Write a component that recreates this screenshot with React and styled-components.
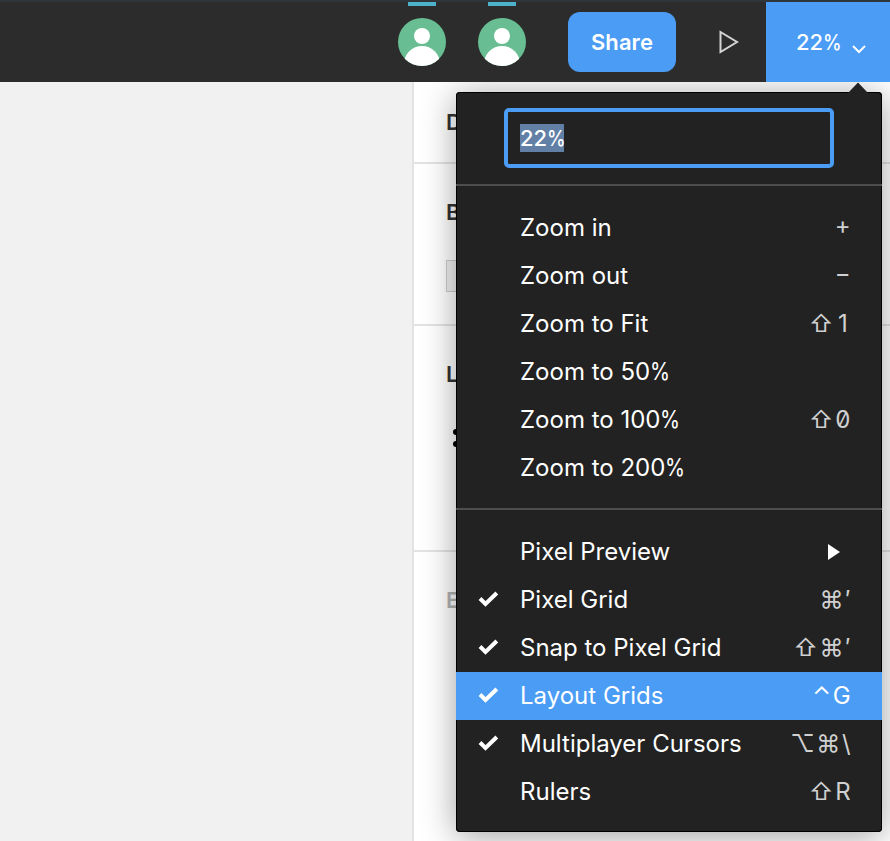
import React from 'react';
import styled, { createGlobalStyle } from 'styled-components';

const BLUE = '#4a9cf5';

const GlobalStyle = createGlobalStyle`
  * { box-sizing: border-box; }
  body {
    margin: 0;
    overflow: hidden;
    font-family: Inter, "Liberation Sans", sans-serif;
    -webkit-font-smoothing: antialiased;
  }
`;

const Screen = styled.div`
  display: flex;
  flex-direction: column;
  width: 890px;
  height: 841px;
  overflow: hidden;
  background: #f1f1f1;
`;

const Toolbar = styled.header`
  position: relative;
  z-index: 3;
  flex: none;
  display: flex;
  justify-content: flex-end;
  height: 82px;
  background: #2c2c2c;
  border-top: 2px solid #2f353a;
`;

const Person = styled.div`
  display: flex;
  flex-direction: column;
  align-items: center;
  width: 48px;
  margin-right: 32px;
`;

const PresenceBar = styled.span`
  width: 28px;
  height: 4px;
  margin-bottom: 12px;
  background: #4eb1cb;
`;

const ShareButton = styled.button`
  width: 108px;
  height: 60px;
  margin: 10px 0 0 10px;
  padding: 0;
  border: 0;
  border-radius: 12px;
  background: ${BLUE};
  color: #fff;
  font: 600 22px/60px Inter, sans-serif;
  letter-spacing: 0.1px;
`;

const PlayButton = styled.div`
  display: flex;
  justify-content: center;
  width: 90px;
  padding: 26px 0 0 16px;
`;

const ZoomButton = styled.div`
  display: flex;
  width: 124px;
  padding-left: 30px;
  background: ${BLUE};
  color: #fff;
  font-size: 22px;
  font-weight: 500;
  line-height: 80px;
  svg { margin: 42px 0 0 10px; }
`;

const PercentSign = styled.span`
  display: inline-block;
  margin-right: -0.14em;
  transform: scaleX(0.85);
  transform-origin: left;
`;

const Workspace = styled.main`
  position: relative;
  flex: 1;
  display: flex;
  justify-content: flex-end;
`;

const Sidebar = styled.aside`
  width: 478px;
  border-left: 2px solid #e3e3e3;
  background: #fff;
`;

const Section = styled.section`
  height: ${(p) => p.$height}px;
  padding: ${(p) => p.$top}px 0 0 32px;
  border-bottom: 2px solid #e3e3e3;
  color: ${(p) => (p.$muted ? '#b3b3b3' : '#333')};
  font-size: 22px;
  font-weight: 600;
  line-height: 32px;
`;

const Swatch = styled.div`
  width: 32px;
  height: 32px;
  margin-top: 32px;
  border: 1px solid #ccc;
  background: #f1f1f1;
`;

const GripDots = styled.svg`
  display: block;
  margin: 38px 0 0 7px;
`;

const Menu = styled.div`
  position: absolute;
  z-index: 2;
  top: 10px;
  right: 8px;
  display: flex;
  flex-direction: column;
  width: 426px;
  height: 740px;
  border-radius: 4px;
  background: #222;
  box-shadow: inset 0 0 0 1px #000, 0 4px 34px rgba(0, 0, 0, 0.38);
  color: #fff;
`;

const Pointer = styled.svg`
  position: absolute;
  top: -10px;
  right: 14px;
`;

const ZoomField = styled.div`
  flex: none;
  width: 330px;
  height: 60px;
  margin: 16px 0 16px 48px;
  padding: 12px;
  border: 4px solid ${BLUE};
  border-radius: 5px;
`;

const Selection = styled.span`
  display: inline-block;
  width: 44px;
  height: 28px;
  background: #627fa6;
  font-size: 22px;
  font-weight: 500;
  line-height: 28px;
  white-space: nowrap;
`;

const Divider = styled.div`
  flex: none;
  height: 2px;
  background: #4d4d4d;
`;

const Group = styled.div`
  display: flex;
  flex-direction: column;
  padding: 18px 0 16px;
`;

const MenuItem = styled.div`
  display: flex;
  align-items: center;
  height: 48px;
  padding-right: 32px;
  background: ${(p) => (p.$active ? BLUE : 'transparent')};
  font-size: 24px;
  line-height: 48px;
  letter-spacing: 0;
`;

const CheckSlot = styled.span`
  display: flex;
  width: 64px;
  padding: 0 0 2px 22px;
`;

const Label = styled.span`
  flex: 1;
  white-space: nowrap;
`;

const Shortcut = styled.span`
  display: flex;
  color: ${(p) => (p.$active ? '#fff' : '#d0d0d0')};
  letter-spacing: 1.6px;
  margin-right: -2.2px;
  font-feature-settings: "zero" 1, "case" 1;
`;

const KeyDigit = styled.span`
  display: inline-block;
  width: 17px;
  text-align: center;
`;

const Avatar = () => (
  <svg width="48" height="48" viewBox="0 0 48 48">
    <defs>
      <clipPath id="disc"><circle cx="24" cy="24" r="24" /></clipPath>
    </defs>
    <g clipPath="url(#disc)">
      <rect width="48" height="48" fill="#68be92" />
      <circle cx="24" cy="18" r="8" fill="#fff" />
      <circle cx="24" cy="46" r="18" fill="#fff" />
    </g>
  </svg>
);

const Check = () => (
  <svg width="21" height="16" viewBox="0 0 21 16">
    <path d="M2 7.5 L7.5 13 L18.8 2" fill="none" stroke="#fff" strokeWidth="4" />
  </svg>
);

const Percentage = ({ text }) => (
  <>
    {text.slice(0, -1)}
    <PercentSign>%</PercentSign>
  </>
);

const groups = [
  [
    { label: 'Zoom in', keys: '+' },
    { label: 'Zoom out', keys: '−' },
    { label: 'Zoom to Fit', keys: '⇧', digit: '1' },
    { label: 'Zoom to 50%' },
    { label: 'Zoom to 100%', keys: '⇧', digit: '0' },
    { label: 'Zoom to 200%' },
  ],
  [
    { label: 'Pixel Preview', submenu: true },
    { label: 'Pixel Grid', checked: true, keys: '⌘′' },
    { label: 'Snap to Pixel Grid', checked: true, keys: '⇧⌘′' },
    { label: 'Layout Grids', checked: true, keys: '⌃G', active: true },
    { label: 'Multiplayer Cursors', checked: true, keys: '⌥⌘\\' },
    { label: 'Rulers', keys: '⇧R' },
  ],
];

export default function App() {
  return (
    <Screen>
      <GlobalStyle />
      <Toolbar>
        <Person><PresenceBar /><Avatar /></Person>
        <Person><PresenceBar /><Avatar /></Person>
        <ShareButton>Share</ShareButton>
        <PlayButton>
          <svg width="20" height="26" viewBox="0 0 20 26">
            <path d="M1.5 4 L18 14 L1.5 24 Z" fill="none" stroke="#d4d4d4" strokeWidth="2" />
          </svg>
        </PlayButton>
        <ZoomButton>
          <span><Percentage text="22%" /></span>
          <svg width="14" height="12" viewBox="0 0 14 12">
            <path d="M1 2 L7 8 L13 2" fill="none" stroke="#fff" strokeWidth="2" />
          </svg>
        </ZoomButton>
      </Toolbar>
      <Workspace>
        <Sidebar>
          <Section $height={82} $top={24}>D</Section>
          <Section $height={162} $top={32}>B<Swatch /></Section>
          <Section $height={226} $top={32}>
            L
            <GripDots width="22" height="20" viewBox="0 0 22 20">
              <circle cx="3" cy="4" r="3" />
              <circle cx="3" cy="16" r="3" />
            </GripDots>
          </Section>
          <Section $height={300} $top={32} $muted>E</Section>
        </Sidebar>
        <Menu>
          <Pointer width="20" height="11" viewBox="0 0 20 11">
            <path d="M0 11 L10 0.5 L20 11 Z" fill="#222" />
          </Pointer>
          <ZoomField><Selection><Percentage text="22%" /></Selection></ZoomField>
          {groups.map((items, i) => (
            <React.Fragment key={i}>
              <Divider />
              <Group>
                {items.map((item) => (
                  <MenuItem key={item.label} $active={item.active}>
                    <CheckSlot>{item.checked && <Check />}</CheckSlot>
                    <Label>
                      {item.label.endsWith('%') ? <Percentage text={item.label} /> : item.label}
                    </Label>
                    {item.keys && (
                      <Shortcut $active={item.active}>
                        {item.keys}
                        {item.digit && <KeyDigit>{item.digit}</KeyDigit>}
                      </Shortcut>
                    )}
                    {item.submenu && (
                      <svg width="22" height="16" viewBox="0 0 22 16">
                        <path d="M0 0 L12 8 L0 16 Z" fill="#fff" />
                      </svg>
                    )}
                  </MenuItem>
                ))}
              </Group>
            </React.Fragment>
          ))}
        </Menu>
      </Workspace>
    </Screen>
  );
}
